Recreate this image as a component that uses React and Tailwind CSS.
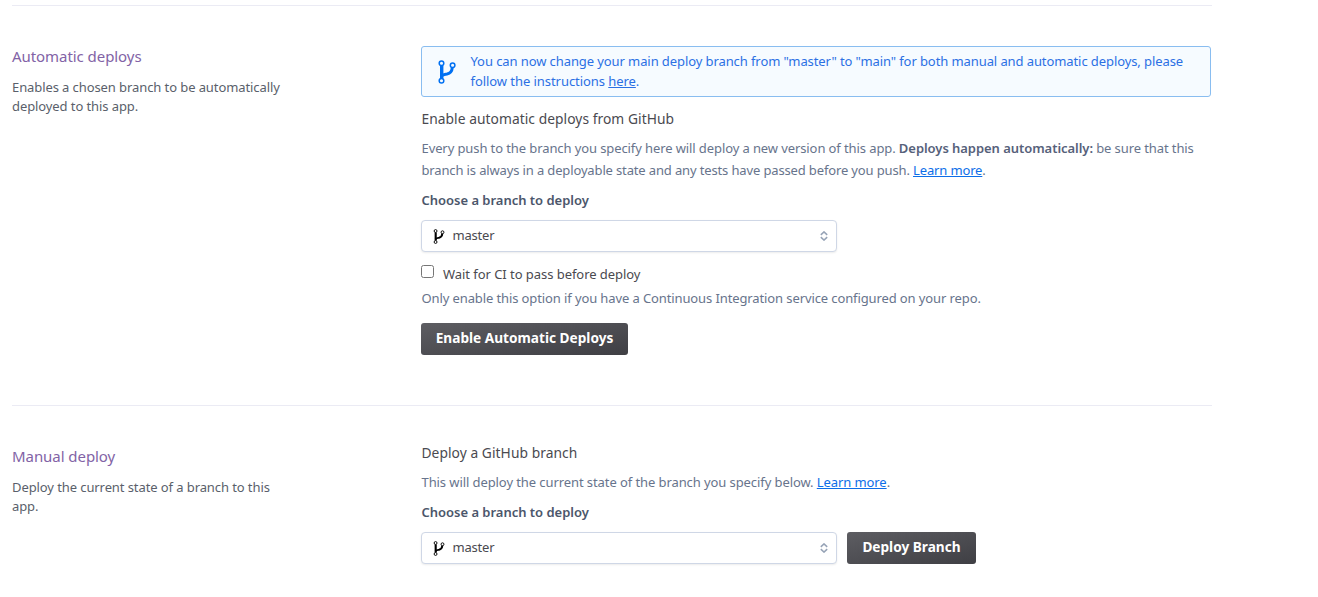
function BranchIcon({ className }) {
  return (
    <svg viewBox="0 0 18 24" className={className} fill="none" stroke="currentColor">
      <circle cx="3.5" cy="3.2" r="2.3" strokeWidth="1.5" />
      <circle cx="14.6" cy="5.2" r="2.3" strokeWidth="1.5" />
      <circle cx="3.5" cy="20.8" r="2.3" strokeWidth="1.5" />
      <path d="M3.7 5.5V18.5" strokeWidth="3.4" />
      <path d="M3.5 16.4C4.5 14.2 6.6 14.4 9 14C12.6 13.3 14 11.5 14.3 7.5" strokeWidth="3" />
    </svg>
  );
}

function BranchSelect() {
  return (
    <button
      type="button"
      className="flex h-8 w-[416px] items-center rounded border border-[#cfd7e6] bg-white pl-[11px] pr-2 text-left shadow-[0_1px_2px_rgba(0,0,0,0.08)]"
    >
      <BranchIcon className="h-[15px] w-[12px] text-black" />
      <span className="mb-0.5 ml-[7.5px] flex-1 text-[13px] leading-5 tracking-[-0.2px] text-[#4a4a50]">master</span>
      <svg viewBox="0 0 8 10" className="h-2.5 w-2 text-[#96a3b6]" fill="none" stroke="currentColor" strokeWidth="1.5">
        <path d="M0.8 3.9L4 0.9L7.2 3.9M0.8 6.1L4 9.1L7.2 6.1" />
      </svg>
    </button>
  );
}

function DarkButton({ children, className }) {
  return (
    <button
      type="button"
      className={`h-8 rounded-[3px] bg-linear-to-br from-[#5d5d62] to-[#3f3f44] pb-0.5 text-center text-[13.65px] leading-[30px] font-bold whitespace-nowrap text-white ${className}`}
    >
      {children}
    </button>
  );
}

function Aside({ title, lines }) {
  return (
    <div className="w-[409px] shrink-0 pt-10 whitespace-nowrap">
      <h2 className="text-[15px] leading-5 tracking-[-0.06px] text-[#8263a6]">{title}</h2>
      <p className="mt-3 text-[13px] leading-[19px] tracking-[-0.09px] text-[#5a5f6b]">
        {lines.map((line) => (
          <span key={line} className="block">{line}</span>
        ))}
      </p>
    </div>
  );
}

function LearnMore() {
  return (
    <a href="#" className="text-[#0d6ee8] underline underline-offset-1">Learn more</a>
  );
}

export default function App() {
  return (
    <main className="h-[597px] overflow-hidden bg-white pt-[5px] pl-3 font-['Noto_Sans','Open_Sans',sans-serif]">
      <section className="flex h-[400px] w-[1200px] border-t border-[#ebebf4]">
        <Aside
          title="Automatic deploys"
          lines={['Enables a chosen branch to be automatically', 'deployed to this app.']}
        />
        <div className="w-[790px] shrink-0 pt-10 text-[13px] whitespace-nowrap text-[#67748c]">
          <div className="flex h-[51px] items-center rounded-[3px] border border-[#89bdf0] bg-[#f6fbff] pl-4 text-[#2b70e4]">
            <BranchIcon className="h-6 w-[18px] text-[#0070f2]" />
            <p className="mb-0.5 ml-[14.5px] leading-5 tracking-[-0.09px]">
              <span className="block">You can now change your main deploy branch from "master" to "main" for both manual and automatic deploys, please</span>
              <span className="block tracking-[-0.06px]">follow the instructions <a href="#" className="underline underline-offset-1">here</a>.</span>
            </p>
          </div>
          <h3 className="mt-3 pl-[0.5px] text-[13.8px] leading-5 tracking-[0.05px] text-[#4a4a50]">Enable automatic deploys from GitHub</h3>
          <p className="mt-2 pl-[0.5px] leading-[22px]">
            <span className="block tracking-[-0.1px]">Every push to the branch you specify here will deploy a new version of this app. <b className="font-semibold tracking-[-0.05px] text-[#56617a]">Deploys happen automatically:</b> be sure that this</span>
            <span className="block tracking-[-0.14px]">branch is always in a deployable state and any tests have passed before you push. <LearnMore />.</span>
          </p>
          <h4 className="mt-[9px] pl-[0.5px] leading-5 font-semibold tracking-[-0.02px] text-[#4b566b]">Choose a branch to deploy</h4>
          <div className="mt-[10px]"><BranchSelect /></div>
          <label className="mt-3 flex h-5 items-start text-[#4a4a50]">
            <input type="checkbox" className="mt-px size-[13px]" />
            <span className="ml-[9px] leading-5 tracking-[-0.05px]">Wait for CI to pass before deploy</span>
          </label>
          <p className="mt-1 pl-[0.5px] leading-5 tracking-[-0.11px]">Only enable this option if you have a Continuous Integration service configured on your repo.</p>
          <DarkButton className="mt-[15px] w-[207px]">Enable Automatic Deploys</DarkButton>
        </div>
      </section>
      <section className="flex w-[1200px] border-t border-[#ebebf4]">
        <Aside
          title="Manual deploy"
          lines={['Deploy the current state of a branch to this', 'app.']}
        />
        <div className="w-[790px] shrink-0 pt-[37px] text-[13px] whitespace-nowrap text-[#67748c]">
          <h3 className="pl-[0.5px] text-[13.8px] leading-5 tracking-[0.05px] text-[#4a4a50]">Deploy a GitHub branch</h3>
          <p className="mt-2 pl-[0.5px] leading-[22px] tracking-[-0.085px]">This will deploy the current state of the branch you specify below. <LearnMore />.</p>
          <h4 className="mt-[9px] pl-[0.5px] leading-5 font-semibold tracking-[-0.02px] text-[#4b566b]">Choose a branch to deploy</h4>
          <div className="mt-[10px] flex gap-[10px]">
            <BranchSelect />
            <DarkButton className="w-[129px]">Deploy Branch</DarkButton>
          </div>
        </div>
      </section>
    </main>
  );
}
